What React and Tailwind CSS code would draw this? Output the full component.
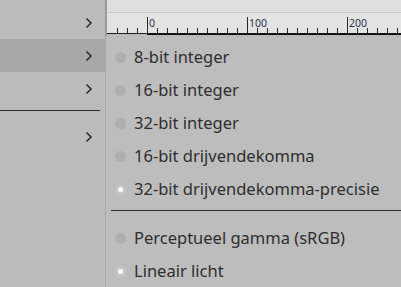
import React from 'react';

const LEFT_ROWS = [
  { id: 'a', active: false },
  { id: 'b', active: true },
  { id: 'c', active: false },
];

const DEPTH_ITEMS = [
  { label: '8-bit integer', checked: false },
  { label: '16-bit integer', checked: false },
  { label: '32-bit integer', checked: false },
  { label: '16-bit drijvendekomma', checked: false },
  { label: '32-bit drijvendekomma-precisie', checked: true },
];

const GAMMA_ITEMS = [
  { label: 'Perceptueel gamma (sRGB)', checked: false },
  { label: 'Lineair licht', checked: true },
];

function Chevron() {
  return (
    <svg width="8" height="12" viewBox="0 0 8 12" className="mr-[12px]">
      <path d="M1.5 1.5 L6 6 L1.5 10.5" fill="none" stroke="#1e1e1e" strokeWidth="1.4" />
    </svg>
  );
}

function LeftRow({ active }) {
  return (
    <div
      className={`h-[33px] flex items-center justify-end ${active ? 'bg-[#a9a9a9]' : ''}`}
    >
      <Chevron />
    </div>
  );
}

function Ruler() {
  const minor = [];
  for (let x = 10; x < 294; x += 10) {
    if ((x - 40) % 100 !== 0) minor.push(x);
  }
  const major = [40, 140, 240];
  return (
    <svg width="294" height="36" className="block">
      <rect x="0" y="0" width="294" height="12" fill="#dedede" />
      <rect x="0" y="12" width="294" height="1" fill="#c6c6c6" />
      <rect x="0" y="13" width="294" height="21" fill="#e3e3e3" />
      <rect x="0" y="34" width="294" height="2" fill="#bbbbbb" />
      {minor.map((x) => (
        <rect key={x} x={x} y="28" width="1" height="5" fill="#2a2a2a" />
      ))}
      {major.map((x, i) => (
        <g key={x}>
          <rect x={x} y="17" width="1" height="16" fill="#2a2a2a" />
          <text
            x={x + 2}
            y="27"
            fontSize="10.5"
            fill="#2c3550"
            fontFamily="'Noto Sans', sans-serif"
          >
            {i * 100}
          </text>
        </g>
      ))}
      <rect x="0" y="33" width="294" height="1" fill="#1a1a1a" />
      <rect x="40" y="33" width="254" height="2" fill="#111111" />
    </svg>
  );
}

function Radio({ checked }) {
  return (
    <span className="w-[28px] flex items-center justify-center">
      {checked ? (
        <span className="w-[11px] h-[11px] rounded-full bg-[#c4c4c4] flex items-center justify-center">
          <span className="w-[5px] h-[5px] rounded-full bg-white" />
        </span>
      ) : (
        <span className="w-[11px] h-[11px] rounded-full bg-[#afafaf] blur-[0.6px]" />
      )}
    </span>
  );
}

function MenuItem({ label, checked }) {
  return (
    <div className="h-[33px] flex items-center">
      <Radio checked={checked} />
      <span className="text-[16.5px] text-[#2e2e2e] whitespace-nowrap">{label}</span>
    </div>
  );
}

export default function App() {
  return (
    <div
      className="w-[401px] h-[287px] overflow-hidden flex bg-[#bbbbbb]"
      style={{ fontFamily: "'Noto Sans', 'Open Sans', sans-serif" }}
    >
      {/* parent menu */}
      <div className="w-[105px] shrink-0 pt-[6px]">
        {LEFT_ROWS.map((r) => (
          <LeftRow key={r.id} active={r.active} />
        ))}
        <div className="pt-[5px] pb-[9px]">
          <div className="h-[1px] w-[100px] bg-[#2a2a2a]" />
        </div>
        <LeftRow active={false} />
      </div>

      <div className="flex-1 flex flex-col min-w-0">
        <div className="flex h-[36px]">
          <div className="w-[2px] bg-[#9a9a9a]" />
          <Ruler />
        </div>
        {/* submenu */}
        <div className="flex-1 border-l border-[#a8a8a8] bg-[#bdbdbd] pt-[5px]">
          {DEPTH_ITEMS.map((it) => (
            <MenuItem key={it.label} {...it} />
          ))}
          <div className="pt-[4px] pb-[11px] pl-[5px]">
            <div className="h-[1px] bg-[#2a2a2a]" />
          </div>
          {GAMMA_ITEMS.map((it) => (
            <MenuItem key={it.label} {...it} />
          ))}
        </div>
      </div>
    </div>
  );
}
